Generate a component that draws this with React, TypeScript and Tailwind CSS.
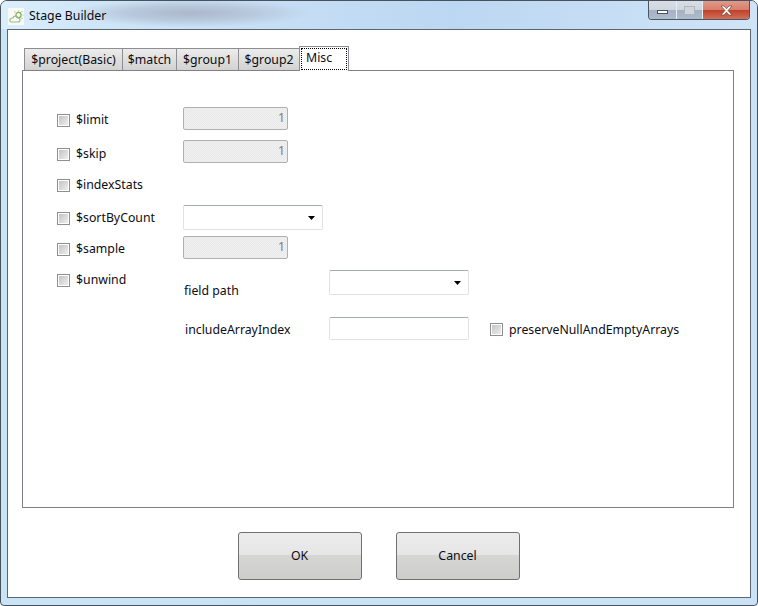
const font = "[font-family:'Noto_Sans','Liberation_Sans',sans-serif]";

function Check({ label, className = "" }: { label: string; className?: string }) {
  return (
    <div className={`flex items-center gap-[6px] ${className}`}>
      <span className="w-[13px] h-[13px] shrink-0 border border-[#8e8f8f] bg-white p-[1px]">
        <span className="block w-full h-full bg-gradient-to-br from-[#c4c4c4] to-[#eeeeee]" />
      </span>
      <span className="text-[12.3px] leading-[18px] text-[#0c0c14] whitespace-nowrap">{label}</span>
    </div>
  );
}

function NumBox({ className = "" }: { className?: string }) {
  return (
    <div className={`w-[105px] h-[23px] rounded-[2px] border border-[#b0b0b0] bg-[repeating-conic-gradient(#f1f1f1_0_25%,#e8e8e8_0_50%)] bg-[length:2px_2px] flex items-center justify-end pr-[2px] text-[12.3px] text-[#7b7b7b] ${className}`}>
      1
    </div>
  );
}

function Combo({ w, className = "" }: { w: string; className?: string }) {
  return (
    <div className={`${w} h-[25px] rounded-[2px] border border-[#dfe3e4] border-t-[#a3aca6] bg-white flex items-center justify-end pr-[7px] ${className}`}>
      <svg width="7" height="4" viewBox="0 0 7 4"><path d="M0 0h7L3.5 4z" fill="#000" /></svg>
    </div>
  );
}

function Tab({ label, w }: { label: string; w: string }) {
  return (
    <div className={`${w} h-[22px] -mr-px pt-px border border-b-0 border-[#8c8e94] bg-gradient-to-b from-[#ececec] to-[#d2d2d0] flex items-center justify-center text-[12.3px] text-[#0c0c14] whitespace-nowrap`}>
      {label}
    </div>
  );
}

function Btn({ label }: { label: string }) {
  return (
    <div className="w-[124px] h-[48px] rounded-[3px] border border-[#707070] bg-[linear-gradient(#ececec_0%,#e6e6e6_47%,#d6d6d4_48%,#cdcdcb_100%)] flex items-center justify-center text-[12.3px] text-[#0c0c14]">
      {label}
    </div>
  );
}

export default function App() {
  return (
    <div className={`${font} w-[758px] h-[606px] overflow-hidden rounded-t-[7px] rounded-b-[4px] border border-[#48525c] flex flex-col bg-[linear-gradient(100deg,#c9e4f6_0%,#c9e2f6_100%)]`}>
      <div className="h-[28px] shrink-0 flex items-start relative bg-[radial-gradient(ellipse_120px_14px_at_190px_12px,#acb7ca_0%,#b9cade_55%,#b9cade00_100%),linear-gradient(90deg,#dbeefb_0%,#cfe6f8_12%,#bcd7f2_60%,#cfe4f7_100%)]">
        <div className="ml-[7px] mt-[7px] w-[16px] h-[17px] bg-[#f8faf6] flex items-center justify-center">
          <svg width="16" height="16" viewBox="0 0 16 16" fill="none" stroke="#8fb56a" strokeWidth="1.2">
            <circle cx="10.500" cy="6" r="2.600" stroke="#7fae55" />
            <path d="M10.500 1.500v1M14.500 6h1M13.500 3l.8-.8M6.500 2.500l.8.8M13.500 9l.8.8" stroke="#9fc27e" />
            <path d="M3 13h6.500c1.600 0 2.500-1 2.500-2.100 0-1.100-.9-1.900-2-1.900C9.500 7.800 8.300 7 7 7.200 5.700 7.400 5 8.200 4.800 9 3.200 8.900 1.800 10 1.800 11.300c0 .8.500 1.400 1.200 1.700z" stroke="#9db88c" />
          </svg>
        </div>
        <span className="ml-[5px] mt-[6px] text-[12.3px] leading-[18px] text-[#0a0a0a]">Stage Builder</span>
        <div className="absolute right-[7px] top-0 flex h-[19px] rounded-b-[4px] overflow-hidden border border-t-0 border-[#4c5660]">
          <div className="w-[28px] bg-[linear-gradient(#d8dee5_0%,#ced6df_50%,#a3b1c4_52%,#aebccd_100%)] border-r border-[#e8eef2] flex items-center justify-center">
            <span className="w-[11px] h-[4px] mt-[3px] bg-white border border-[#47505c]" />
          </div>
          <div className="w-[26px] bg-[linear-gradient(#d8dee5_0%,#ced6df_50%,#a3b1c4_52%,#aebccd_100%)] border-r border-[#e8eef2] flex items-center justify-center">
            <span className="w-[11px] h-[9px] border border-[#b0b6bd] bg-[#cfd5db]" />
          </div>
          <div className="w-[46px] bg-[linear-gradient(#e09a8a_0%,#d87f6c_48%,#c2412b_52%,#d0705a_100%)] flex items-center justify-center">
            <svg width="13" height="11" viewBox="0 0 13 11">
              <path d="M1 1h3l2.500 2.800L9 1h3L8 5.500 12 10H9L6.500 7.200 4 10H1l4-4.500z" fill="#fff" stroke="#5d3a35" strokeWidth=".6" />
            </svg>
          </div>
        </div>
      </div>

      <div className="ml-[6px] mr-[6px] mb-[7px] flex-1 border border-[#5c6670] bg-white flex flex-col px-[14px] pt-[16px]">
        <div className="pl-[2px] h-[24px] flex items-end relative z-10">
          <Tab label="$project(Basic)" w="w-[99px]" />
          <Tab label="$match" w="w-[55px]" />
          <Tab label="$group1" w="w-[63px]" />
          <Tab label="$group2" w="w-[62px]" />
          <div className="w-[50px] h-[25px] border border-b-0 border-[#8c8e94] bg-white flex p-[1px] -mb-px">
            <div className="flex-1 border border-dotted border-black flex justify-start pl-[4px] text-[12.3px] leading-[18px] text-[#0c0c14]">
              Misc
            </div>
          </div>
        </div>
        <div className="w-[712px] h-[438px] border border-[#837f8a] pl-[34px] pt-[30px] flex flex-col">
          <div className="h-[33px] flex items-start"><Check label="$limit" className="w-[126px] mt-[10px]" /><NumBox className="mt-[6px]" /></div>
          <div className="h-[33px] flex items-start"><Check label="$skip" className="w-[126px] mt-[11px]" /><NumBox className="mt-[6px]" /></div>
          <div className="h-[33px] flex items-start"><Check label="$indexStats" className="w-[126px] mt-[9px]" /></div>
          <div className="h-[32px] flex items-start"><Check label="$sortByCount" className="w-[126px] mt-[9px]" /><Combo w="w-[140px]" className="mt-[5px]" /></div>
          <div className="h-[32px] flex items-start"><Check label="$sample" className="w-[126px] mt-[8px]" /><NumBox className="mt-[4px]" /></div>
          <div className="flex">
            <Check label="$unwind" className="w-[126px] h-[18px] mt-[7px]" />
            <div className="flex flex-col text-[12.3px] text-[#0c0c14] pt-[6px]">
              <div className="h-[25px] flex">
                <span className="w-[146px] pl-[1px] mt-[12px] leading-[18px]">field path</span>
                <Combo w="w-[140px]" />
              </div>
              <div className="h-[23px] mt-[22px] flex items-center">
                <span className="w-[146px] pl-[2px] pt-[2px] leading-[18px]">includeArrayIndex</span>
                <div className="w-[140px] h-[23px] rounded-[2px] border border-[#dfe3e4] border-t-[#a3aca6] bg-white" />
                <Check label="preserveNullAndEmptyArrays" className="ml-[21px] pt-[2px]" />
              </div>
            </div>
          </div>
        </div>
        <div className="flex justify-center gap-[34px] pt-[24px] pr-[1px]">
          <Btn label="OK" />
          <Btn label="Cancel" />
        </div>
      </div>
    </div>
  );
}
